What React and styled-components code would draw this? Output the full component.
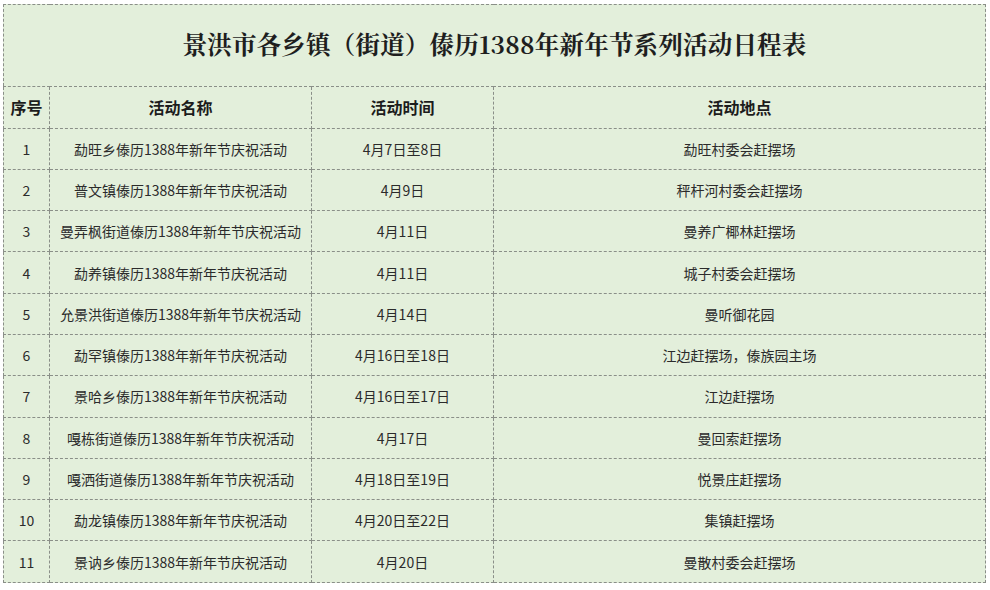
import React from "react";
import styled, { createGlobalStyle } from "styled-components";

const Global = createGlobalStyle`
  html, body { margin: 0; padding: 0; background: #ffffff; }
  body { font-family: "Noto Sans CJK SC", "Noto Sans", sans-serif; }
`;

const Page = styled.div`
  padding: 4px 5px 0 3px;
  width: 990px;
  box-sizing: border-box;
`;

const Table = styled.table`
  width: 982px;
  border-collapse: collapse;
  table-layout: fixed;
  background: #e3efdb;
  color: #2a2a2a;
  border: 1px dashed #8a8f88;
`;

const TitleCell = styled.td`
  height: 77px;
  text-align: center;
  font-family: "Noto Serif CJK SC", "Noto Sans CJK SC", serif;
  font-weight: 700;
  font-size: 24.5px;
  color: #1e1e1e;
  letter-spacing: 0.2px;
  padding: 0 0 4px 0;
  border-bottom: 1px dashed #8a8f88;
`;

const HeadCell = styled.th`
  height: 40.5px;
  font-size: 16px;
  font-weight: 700;
  color: #1c1c1c;
  text-align: center;
  padding: 0;
  border: 1px dashed #8a8f88;
`;

const Cell = styled.td`
  height: 40.3px;
  font-size: 14px;
  text-align: center;
  padding: 0;
  color: #2b2b2b;
  border: 1px dashed #8a8f88;
`;

const rows = [
  ["1", "勐旺乡傣历1388年新年节庆祝活动", "4月7日至8日", "勐旺村委会赶摆场"],
  ["2", "普文镇傣历1388年新年节庆祝活动", "4月9日", "秤杆河村委会赶摆场"],
  ["3", "曼弄枫街道傣历1388年新年节庆祝活动", "4月11日", "曼养广椰林赶摆场"],
  ["4", "勐养镇傣历1388年新年节庆祝活动", "4月11日", "城子村委会赶摆场"],
  ["5", "允景洪街道傣历1388年新年节庆祝活动", "4月14日", "曼听御花园"],
  ["6", "勐罕镇傣历1388年新年节庆祝活动", "4月16日至18日", "江边赶摆场，傣族园主场"],
  ["7", "景哈乡傣历1388年新年节庆祝活动", "4月16日至17日", "江边赶摆场"],
  ["8", "嘎栋街道傣历1388年新年节庆祝活动", "4月17日", "曼回索赶摆场"],
  ["9", "嘎洒街道傣历1388年新年节庆祝活动", "4月18日至19日", "悦景庄赶摆场"],
  ["10", "勐龙镇傣历1388年新年节庆祝活动", "4月20日至22日", "集镇赶摆场"],
  ["11", "景讷乡傣历1388年新年节庆祝活动", "4月20日", "曼散村委会赶摆场"],
];

export default function App() {
  return (
    <Page>
      <Global />
      <Table>
        <colgroup>
          <col style={{ width: 46 }} />
          <col style={{ width: 262 }} />
          <col style={{ width: 182 }} />
          <col style={{ width: 492 }} />
        </colgroup>
        <tbody>
          <tr>
            <TitleCell colSpan={4}>景洪市各乡镇（街道）傣历1388年新年节系列活动日程表</TitleCell>
          </tr>
          <tr>
            <HeadCell>序号</HeadCell>
            <HeadCell>活动名称</HeadCell>
            <HeadCell>活动时间</HeadCell>
            <HeadCell>活动地点</HeadCell>
          </tr>
          {rows.map((r) => (
            <tr key={r[0]}>
              {r.map((c, i) => (
                <Cell key={i}>{c}</Cell>
              ))}
            </tr>
          ))}
        </tbody>
      </Table>
    </Page>
  );
}
